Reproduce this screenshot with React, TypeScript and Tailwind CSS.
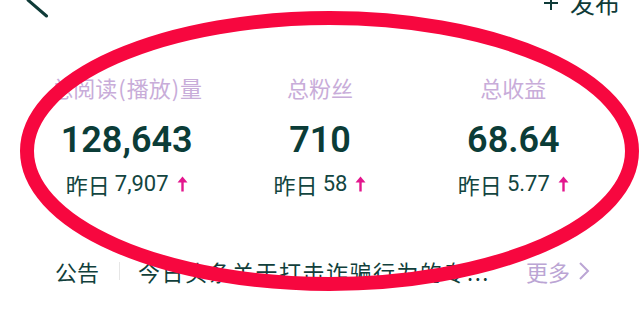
import React from "react";

const cjk = { fontFamily: '"Noto Sans CJK SC", "Noto Sans", sans-serif' };
const num = { fontFamily: 'Roboto, "Noto Sans CJK SC", sans-serif' };

function UpArrow() {
  return (
    <svg width="11" height="16" viewBox="0 0 11 16" className="ml-[8px]">
      <path d="M5.5 0.5 L10.5 6.5 L0.5 6.5 Z" fill="#e3168d" />
      <rect x="4.3" y="5" width="2.4" height="10.5" fill="#e3168d" />
    </svg>
  );
}

function Stat({ label, value, sub }: { label: React.ReactNode; value: string; sub: string }) {
  return (
    <div className="flex flex-col items-center">
      <div className="text-[22px] leading-[28px] text-[#c8acd9] whitespace-nowrap" style={cjk}>
        {label}
      </div>
      <div className="mt-[19px] text-[36px] leading-[40px] font-semibold text-[#0b3c37]" style={num}>
        {value}
      </div>
      <div className="mt-[11px] flex items-center text-[22px] leading-[26px] text-[#134540]">
        <span style={cjk}>昨日</span>
        <span className="ml-[5px]" style={num}>
          {sub}
        </span>
        <UpArrow />
      </div>
    </div>
  );
}

export default function App() {
  return (
    <div className="relative w-[640px] h-[313px] overflow-hidden bg-white">
      {/* header (scrolled, partly cut off) */}
      <div className="-mt-[20px] h-[40px] flex items-center justify-between pl-[25px] pr-[20px]">
        <svg width="24" height="36" viewBox="0 0 24 36">
          <polyline
            points="21.5,34 3,18 21.5,2"
            fill="none"
            stroke="#0f3b38"
            strokeWidth="3"
            strokeLinecap="round"
            strokeLinejoin="round"
          />
        </svg>
        <div className="flex items-center text-[25px] leading-[30px] text-[#0f3b38]" style={cjk}>
          <svg width="14" height="14" viewBox="0 0 14 14" className="mr-[12px] mt-[6px]">
            <path d="M7 0 V14 M0 7 H14" stroke="#0f3b38" strokeWidth="2" />
          </svg>
          <span className="mt-[4px]">发布</span>
        </div>
      </div>

      {/* stats */}
      <div className="mx-[30px] mt-[53px] grid grid-cols-3">
        <Stat
          label={
            <>
              总阅读<span className="mx-[1px]">(</span>播放<span className="mx-[1px]">)</span>量
            </>
          }
          value="128,643"
          sub="7,907"
        />
        <Stat label="总粉丝" value="710" sub="58" />
        <Stat label="总收益" value="68.64" sub="5.77" />
      </div>

      {/* announcement */}
      <div className="mt-[60px] ml-[55px] mr-[40px] flex items-center text-[22px] leading-[28px]" style={cjk}>
        <span className="text-[#113f3b]">公告</span>
        <span className="ml-[20px] h-[18px] w-px bg-[#e6e6e6]" />
        <span className="ml-[18px] w-[358px] text-[#113f3b] tracking-[1.5px] whitespace-nowrap overflow-hidden">
          今日头条关于打击诈骗行为的专...
        </span>
        <span className="ml-[30px] text-[#bba5d4]">更多</span>
        <svg width="12" height="20" viewBox="0 0 12 20" className="ml-[8px]">
          <polyline points="2,2 10,10 2,18" fill="none" stroke="#bba5d4" strokeWidth="2" />
        </svg>
      </div>

      {/* red annotation ellipse */}
      <svg
        className="absolute left-0 top-0 pointer-events-none"
        width="640"
        height="313"
        viewBox="0 0 640 313"
      >
        <ellipse cx="329.5" cy="151" rx="302.5" ry="133" fill="none" stroke="#f7073f" strokeWidth="14" />
      </svg>
    </div>
  );
}
